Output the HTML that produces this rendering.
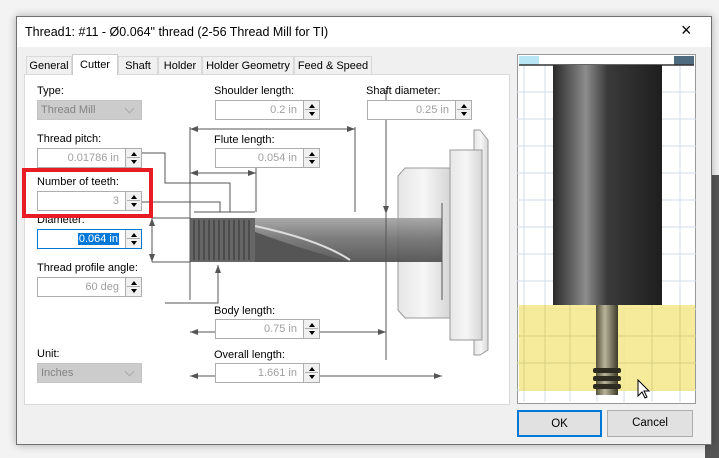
<!DOCTYPE html>
<html><head><meta charset="utf-8"><style>
*{margin:0;padding:0;box-sizing:border-box}
body{width:719px;height:458px;background:#f3f3f3;position:relative;overflow:hidden;font-family:"Liberation Sans",sans-serif;font-size:12px;color:#000}
.a{position:absolute}
.lbl{position:absolute;font-size:11px;white-space:nowrap}
.fld{position:absolute;height:20px;border:1px solid #adadad;background:#fff;color:#a0a0a0;font-size:11px;text-align:right;padding:3px 22px 0 0;white-space:nowrap}
.fld .sp{position:absolute;right:0;top:0;width:16px;height:18px;border-left:1px solid #adadad;background:#f0f0f0}
.sp:before{content:"";position:absolute;left:5px;top:3px;border:3px solid transparent;border-bottom:4px solid #000;border-top:0}
.sp:after{content:"";position:absolute;left:5px;top:11px;border:3px solid transparent;border-top:4px solid #000;border-bottom:0}
.sp i{position:absolute;left:1px;right:1px;top:8px;border-top:1px solid #adadad}
.cmb{position:absolute;height:20px;background:#cccccc;border:1px solid #c4c4c4;color:#838383;font-size:11px;padding:3px 0 0 3px}
.cmb:after{content:"";position:absolute;right:8px;top:4px;width:6px;height:6px;border-right:1px solid #aaa;border-bottom:1px solid #aaa;transform:rotate(45deg)}
.tab{position:absolute;top:56px;height:18px;border:1px solid #d9d9d9;border-bottom:0;background:#f0f0f0;font-size:11px;padding:3px 0 0;text-align:center;white-space:nowrap;overflow:hidden}
.btn{position:absolute;top:410px;height:27px;background:#e1e1e1;border:1px solid #adadad;text-align:center;padding-top:6px;font-size:11.5px}
</style></head><body>
<div class="a" style="left:705px;top:175px;width:14px;height:283px;background:#555"></div>
<div class="a" style="left:16px;top:16px;width:696px;height:429px;background:#f0f0f0;border:1px solid #707070;box-shadow:0 0 8px rgba(0,0,0,.3)"></div>
<div class="a" style="left:17px;top:17px;width:694px;height:30px;background:#fff"></div>
<div class="lbl" style="left:25px;top:25px;font-size:12.5px">Thread1: #11 - Ø0.064" thread (2-56 Thread Mill for TI)</div>
<div class="lbl" style="left:681px;top:20px;font-size:18px">×</div>
<div class="a" style="left:24px;top:74px;width:486px;height:331px;background:#fff;border:1px solid #d9d9d9"></div>
<div class="tab" style="left:26px;width:46px">General</div>
<div class="tab" style="left:72px;top:54px;height:21px;width:46px;background:#fff;padding-top:4px;border-color:#ccc">Cutter</div>
<div class="tab" style="left:118px;width:40px">Shaft</div>
<div class="tab" style="left:158px;width:44px">Holder</div>
<div class="tab" style="left:202px;width:92px">Holder Geometry</div>
<div class="tab" style="left:294px;width:78px">Feed &amp; Speed</div>

<svg class="a" style="left:24px;top:74px" width="486" height="331" viewBox="24 74 486 331">
<defs>
<linearGradient id="g1" x1="0" y1="0" x2="0" y2="1"><stop offset="0" stop-color="#a0a0a0"/><stop offset=".45" stop-color="#707070"/><stop offset="1" stop-color="#4a4a4a"/></linearGradient>
<linearGradient id="g2" x1="0" y1="0" x2="1" y2="0"><stop offset="0" stop-color="#e6e6e6"/><stop offset=".5" stop-color="#f6f6f6"/><stop offset="1" stop-color="#d6d6d6"/></linearGradient>
</defs>
<g fill="url(#g2)" stroke="#999" stroke-width="1">
<path d="M480 130 L488 140 L488 350 L480 355 L474 355 L474 130Z"/>
<rect x="450" y="150" width="32" height="190"/>
<path d="M398 176 L405 168 L450 168 L450 318 L405 318 L398 310Z"/>
</g>
<rect x="255" y="218" width="187" height="44" fill="url(#g1)" opacity=".9"/>
<path d="M255 232 Q310 252 350 262 L255 262Z" fill="#555"/>
<path d="M255 226 Q320 240 350 260" stroke="#ddd" stroke-width="2" fill="none"/>
<rect x="190" y="218" width="65" height="44" fill="#666"/>
<g stroke="#333" stroke-width="1"><path d="M194 220v40M199 220v40M204 220v40M209 220v40M214 220v40M219 220v40M224 220v40M229 220v40M234 220v40M239 220v40M244 220v40M249 220v40"/></g>
<g stroke="#555" fill="none" stroke-width="1">
<path d="M190 127V300M355 127V212M190 129H355M190 173H256M256 160V212M442 203V300"/>
<path d="M386 90V360M190 332H386M190 376H442M142 153H165V183H230V212M142 202H220V212M165 303H218V265"/>
<path d="M152 218V262M152 218H190M152 262H190M194 212H255M230 212H248"/>
</g>
<g fill="#555"><path d="M190 129l8-3v6zM355 129l-8-3v6zM190 173l8-3v6zM256 173l-8-3v6zM190 332l8-3v6zM386 332l-8-3v6zM190 376l8-3v6zM442 376l-8-3v6zM152 218l-3 8h6zM152 262l-3-8h6zM386 214l-3-8h6zM218 265l-3 8h6z"/></g>
</svg>

<div class="lbl" style="left:37px;top:85px">Type:</div>
<div class="cmb" style="left:37px;top:100px;width:105px">Thread Mill</div>
<div class="lbl" style="left:214px;top:85px">Shoulder length:</div>
<div class="fld" style="left:215px;top:100px;width:105px">0.2 in<div class="sp"><i></i></div></div>
<div class="lbl" style="left:366px;top:85px">Shaft diameter:</div>
<div class="fld" style="left:367px;top:100px;width:105px">0.25 in<div class="sp"><i></i></div></div>
<div class="lbl" style="left:37px;top:133px">Thread pitch:</div>
<div class="fld" style="left:37px;top:148px;width:105px">0.01786 in<div class="sp"><i></i></div></div>
<div class="lbl" style="left:214px;top:134px">Flute length:</div>
<div class="fld" style="left:215px;top:148px;width:105px">0.054 in<div class="sp"><i></i></div></div>
<div class="lbl" style="left:37px;top:214px">Diameter:</div>
<div class="lbl" style="left:37px;top:176px">Number of teeth:</div>
<div class="fld" style="left:37px;top:191px;width:105px">3<div class="sp"><i></i></div></div>
<div class="a" style="left:22px;top:168px;width:131px;height:50px;border:4px solid #e81c24"></div>
<div class="fld" style="left:37px;top:229px;width:105px;border-color:#0078d7;color:#fff"><span style="background:#0078d7;padding:0 1px">0.064 in</span><div class="sp"><i></i></div></div>
<div class="lbl" style="left:37px;top:262px">Thread profile angle:</div>
<div class="fld" style="left:37px;top:277px;width:105px">60 deg<div class="sp"><i></i></div></div>
<div class="lbl" style="left:214px;top:305px">Body length:</div>
<div class="fld" style="left:215px;top:319px;width:105px">0.75 in<div class="sp"><i></i></div></div>
<div class="lbl" style="left:214px;top:349px">Overall length:</div>
<div class="fld" style="left:215px;top:363px;width:105px">1.661 in<div class="sp"><i></i></div></div>
<div class="lbl" style="left:37px;top:348px">Unit:</div>
<div class="cmb" style="left:37px;top:363px;width:105px">Inches</div>

<svg class="a" style="left:517px;top:54px" width="180" height="351">
<defs><linearGradient id="sh" x1="0" x2="1"><stop offset="0" stop-color="#2a2a2a"/><stop offset=".3" stop-color="#8c8c8c"/><stop offset=".5" stop-color="#3a3a3a"/><stop offset="1" stop-color="#1e1e1e"/></linearGradient>
<linearGradient id="st" x1="0" x2="1"><stop offset="0" stop-color="#55523a"/><stop offset=".4" stop-color="#b8b49a"/><stop offset="1" stop-color="#3d3a28"/></linearGradient></defs>
<rect x="0.5" y="0.5" width="178" height="349" fill="#fff" stroke="#999"/>
<g stroke="#d0dcea"><path d="M7 10V348M28 10V348M53 10V348M80 10V348M107 10V348M135 10V348M163 10V348M0 38H179M0 65H179M0 92H179M0 119H179M0 146H179M0 173H179M0 200H179M0 227H179M0 255H179M0 282H179M0 309H179M0 336H179"/></g>
<rect x="2" y="2" width="20" height="9" fill="#b8e6f4"/><rect x="157" y="2" width="20" height="9" fill="#4f6b80"/>
<path d="M2 11H177" stroke="#333" stroke-width="1.5"/>
<rect x="2" y="251" width="176" height="86" fill="#f5e88a" opacity=".85"/>
<g stroke="#d8cf80"><path d="M7 251V337M28 251V337M53 251V337M135 251V337M163 251V337M0 282H179M0 309H179"/></g>
<rect x="36" y="11" width="109" height="240" fill="url(#sh)"/>
<rect x="79" y="251" width="22" height="90" fill="url(#st)"/>
<g fill="#2e2c20"><rect x="76" y="314" width="28" height="5" rx="2"/><rect x="76" y="322" width="28" height="5" rx="2"/><rect x="76" y="330" width="28" height="5" rx="2"/></g>
<path d="M121 326v16l4-4 3 6 2-1-3-6h5z" fill="#fff" stroke="#000"/>
</svg>
<div class="btn" style="left:517px;width:85px;border:2px solid #0078d7">OK</div>
<div class="btn" style="left:607px;width:86px">Cancel</div>
</body></html>
